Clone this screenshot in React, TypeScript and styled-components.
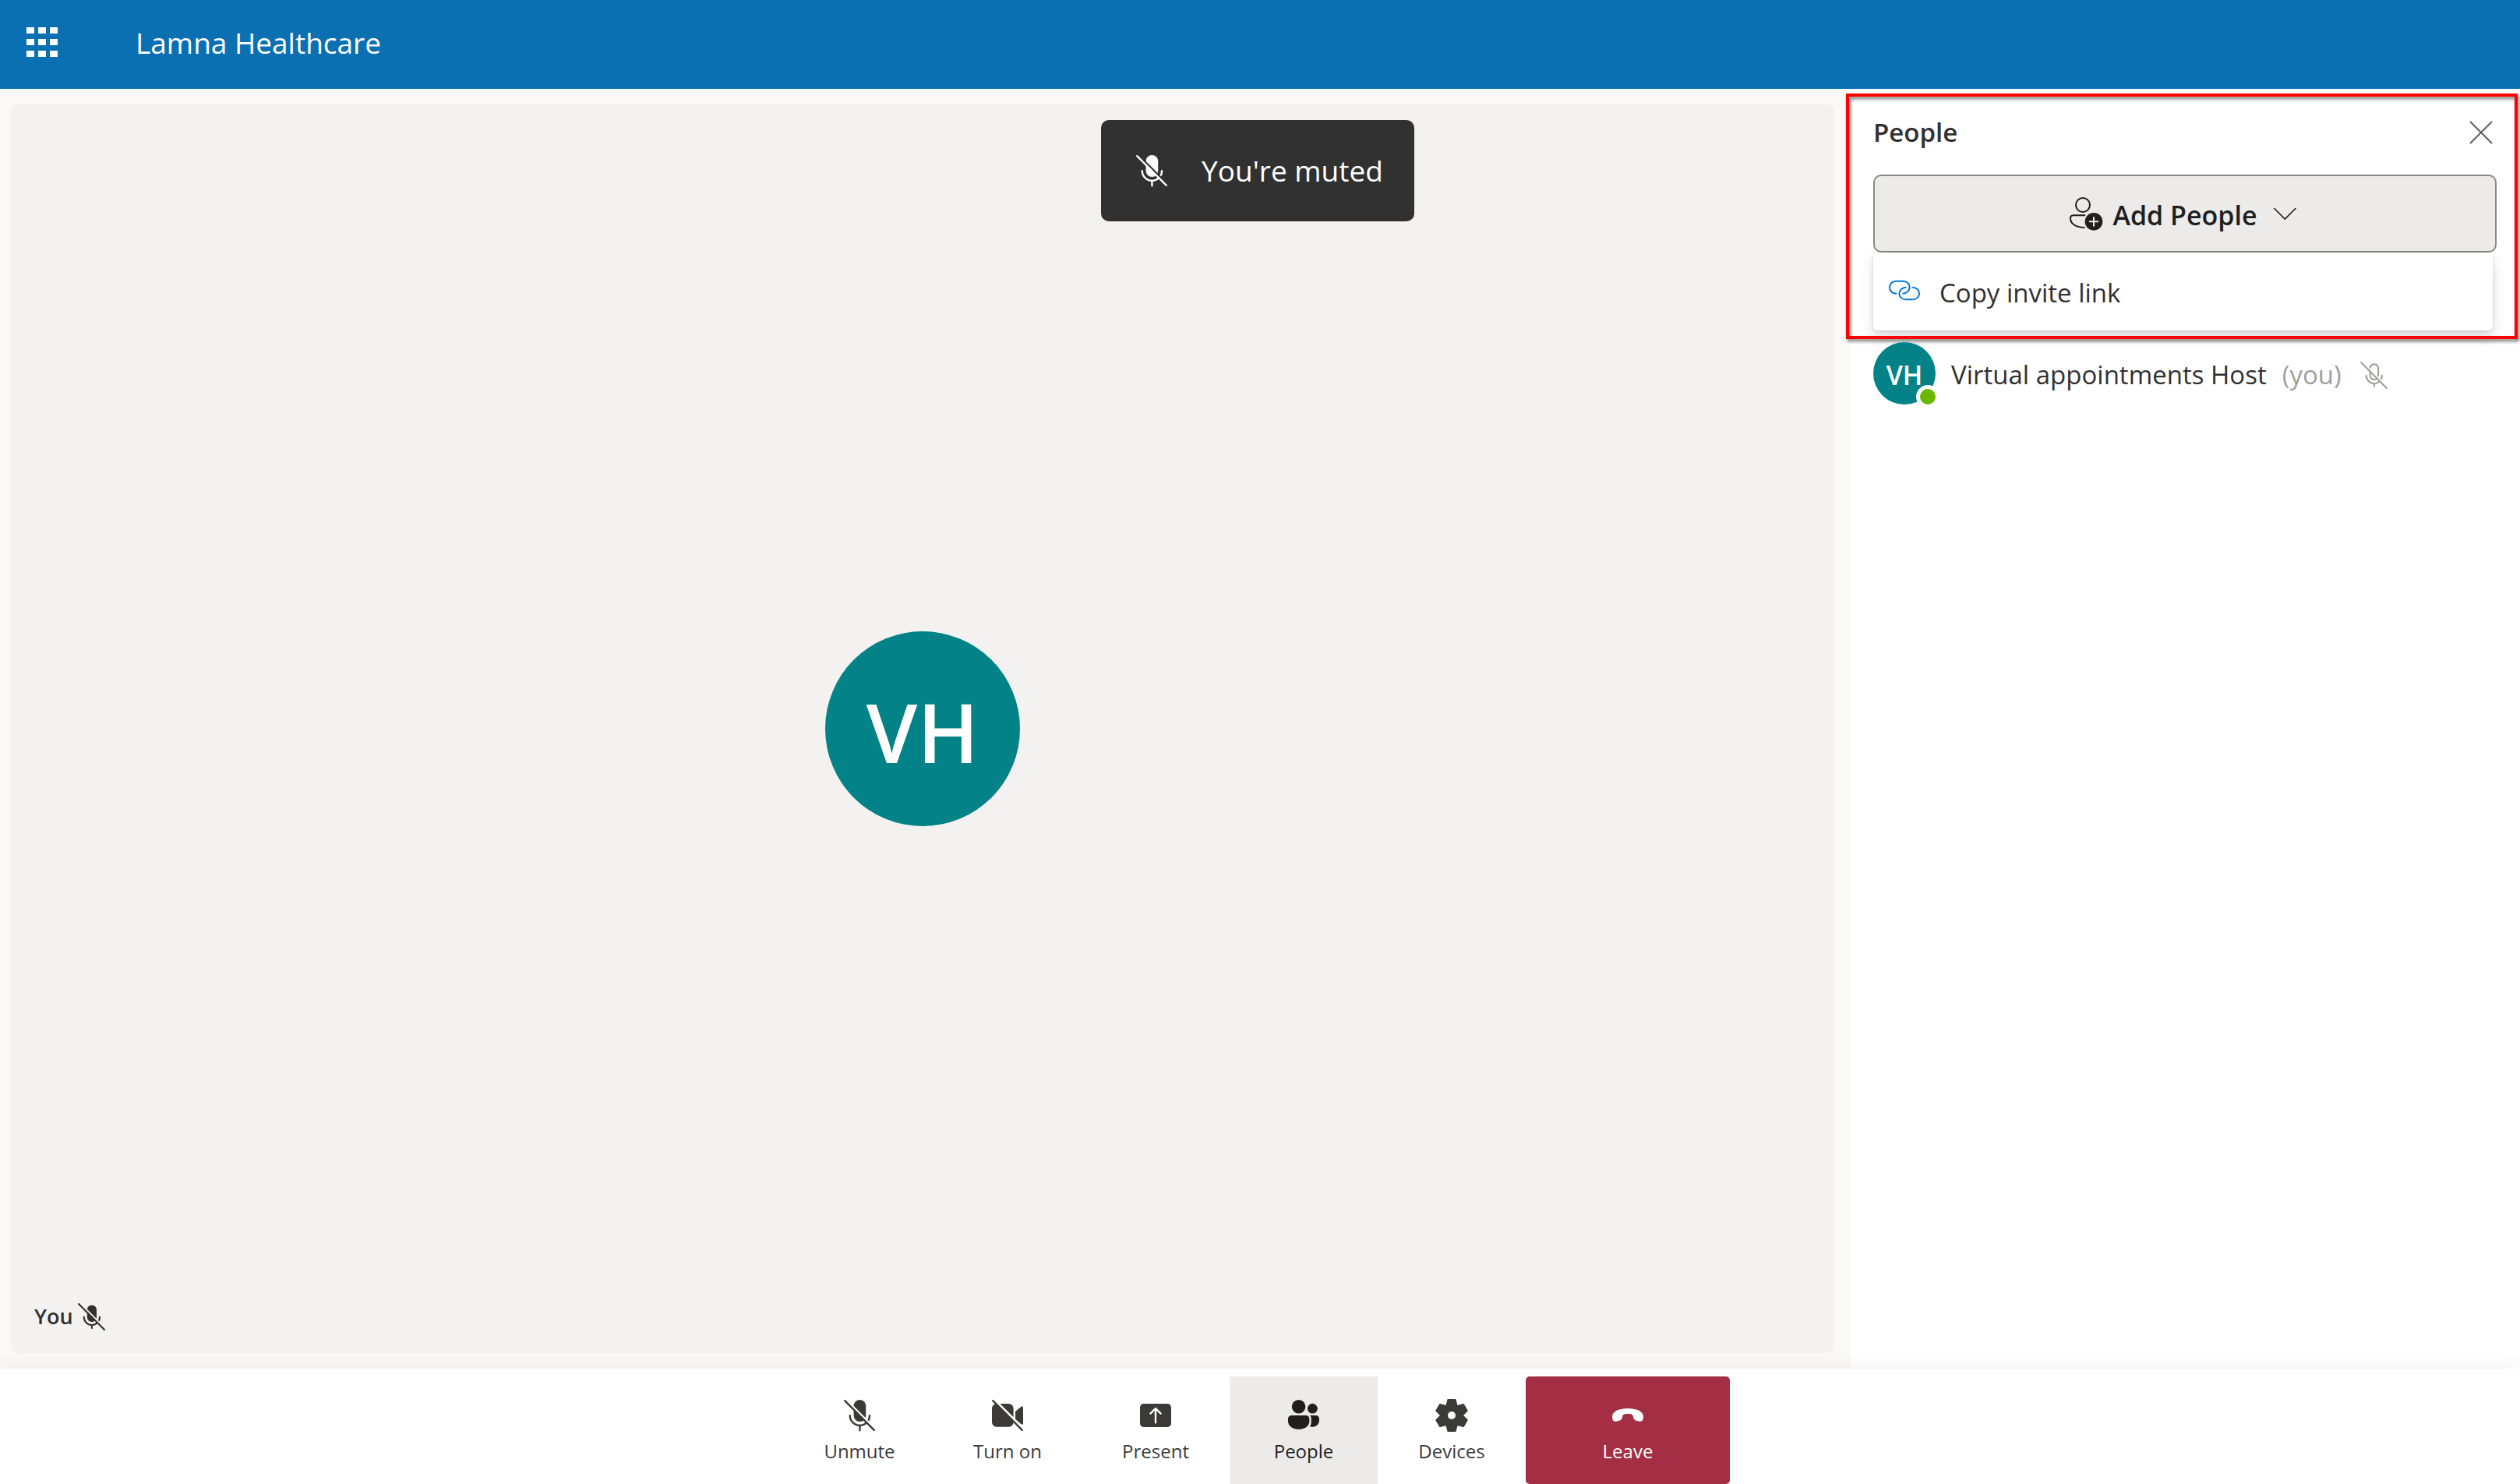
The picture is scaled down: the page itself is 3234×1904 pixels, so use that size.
import React, { useId } from "react";
import styled, { createGlobalStyle, css } from "styled-components";

const color = {
  brand: "#0b70b1",
  page: "#faf9f8",
  stage: "#f3f2f1",
  white: "#ffffff",
  text: "#323130",
  strong: "#201f1e",
  icon: "#3b3a39",
  muted: "#a19f9d",
  hover: "#edebe9",
  border: "#8a8886",
  teal: "#038387",
  green: "#6bb700",
  danger: "#a42e43",
  link: "#0078d4",
  toast: "#313131",
};

const GlobalStyle = createGlobalStyle`
  *, *::before, *::after { box-sizing: border-box; }
  body {
    margin: 0;
    background: ${color.page};
    color: ${color.text};
    font-family: "Open Sans", "Noto Sans", sans-serif;
    font-size: 33px;
    line-height: 48px;
  }
  button { font: inherit; color: inherit; border: 0; padding: 0; background: none; cursor: pointer; }
  h1, h2, p, ul { margin: 0; padding: 0; font: inherit; }
  ul { list-style: none; }
  svg { display: block; flex: none; overflow: visible; }
`;

const Page = styled.div`
  position: relative;
  display: flex;
  flex-direction: column;
  min-height: 100vh;
`;

const Header = styled.header`
  display: flex;
  align-items: center;
  gap: 100px;
  height: 114px;
  padding: 0 34px 4px;
  background: ${color.brand};
  color: ${color.white};
`;

const Waffle = styled.button`
  display: grid;
  grid-template-columns: repeat(3, 10px);
  gap: 7px 5px;
  margin-bottom: 2px;
`;

const WaffleDot = styled.span`
  height: 8px;
  background: ${color.white};
`;

const Brand = styled.h1`
  font-size: 37px;
`;

const Main = styled.main`
  display: flex;
  flex: 1;
`;

const StageArea = styled.div`
  display: flex;
  flex: 1;
  padding: 20px 20px 20px 14px;
`;

const Stage = styled.section`
  position: relative;
  display: flex;
  flex: 1;
  align-items: center;
  justify-content: center;
  border-radius: 10px;
  background: ${color.stage};
`;

const Avatar = styled.div<{ $large?: boolean }>`
  position: relative;
  display: flex;
  flex: none;
  align-items: center;
  justify-content: center;
  width: ${(p) => (p.$large ? 250 : 80)}px;
  height: ${(p) => (p.$large ? 250 : 80)}px;
  padding-top: ${(p) => (p.$large ? 8 : 4)}px;
  border-radius: 50%;
  background: ${color.teal};
  color: ${color.white};
  font-size: ${(p) => (p.$large ? 105 : 34)}px;
  font-weight: 600;
`;

const Presence = styled.span`
  position: absolute;
  right: -5px;
  bottom: -5px;
  width: 30px;
  height: 30px;
  border: 5px solid ${color.white};
  border-radius: 50%;
  background: ${color.green};
`;

const StageLabel = styled.div`
  position: absolute;
  left: 30px;
  bottom: 23px;
  display: flex;
  align-items: center;
  gap: 6px;
  font-size: 27px;
  font-weight: 600;
`;

const Toast = styled.div`
  position: absolute;
  top: 154px;
  left: 0;
  right: 6px;
  display: flex;
  align-items: center;
  gap: 44px;
  width: fit-content;
  height: 130px;
  margin: 0 auto;
  padding: 0 40px 0 45px;
  border-radius: 10px;
  background: ${color.toast};
  color: ${color.white};
  font-size: 37px;
`;

const Sidebar = styled.aside`
  width: 860px;
  background: ${color.white};
`;

const InviteSection = styled.section`
  position: relative;
  padding: 32px 30px 15px;
`;

const Highlight = styled.div`
  position: absolute;
  top: 6px;
  right: 3px;
  bottom: 4px;
  left: -5px;
  border: 4px solid #ff0000;
  filter: drop-shadow(2px 3px 2px rgba(0, 0, 0, 0.55));
  pointer-events: none;
`;

const PanelHeader = styled.div`
  display: flex;
  align-items: center;
  justify-content: space-between;
  padding: 0 5px 30px 0;
`;

const PanelTitle = styled.h2`
  font-weight: 600;
`;

const Label = styled.span`
  padding-top: 4px;
`;

const AddButton = styled.button`
  display: flex;
  align-items: center;
  justify-content: center;
  gap: 12px;
  width: 100%;
  height: 100px;
  border: 2px solid ${color.border};
  border-radius: 10px;
  background: ${color.hover};
  color: ${color.strong};
  font-size: 34px;
  font-weight: 600;
`;

const Menu = styled.ul`
  margin-right: 5px;
  border-radius: 5px;
  background: ${color.white};
  box-shadow: 0 8px 18px rgba(0, 0, 0, 0.13), 0 2px 5px rgba(0, 0, 0, 0.11);
`;

const MenuItem = styled.button`
  display: flex;
  align-items: center;
  gap: 25px;
  width: 100%;
  height: 100px;
  padding: 0 20px;
`;

const Participant = styled.li`
  display: flex;
  align-items: center;
  gap: 20px;
  padding: 0 30px;
`;

const Muted = styled(Label)`
  display: flex;
  align-items: center;
  gap: 24px;
  color: ${color.muted};
`;

const ControlBar = styled.footer`
  position: relative;
  display: flex;
  justify-content: center;
  height: 148px;
  padding: 10px 6px 0 0;
  background: ${color.white};
  box-shadow: 0 -2px 24px rgba(0, 0, 0, 0.06);
`;

const Control = styled.button<{ $active?: boolean; $danger?: boolean }>`
  display: flex;
  flex-direction: column;
  align-items: center;
  gap: 9px;
  width: 190px;
  padding-top: 30px;
  color: ${color.icon};
  font-size: 24px;
  line-height: 34px;
  ${(p) => p.$active && css`background: ${color.hover}; color: ${color.strong};`}
  ${(p) =>
    p.$danger &&
    css`
      width: 262px;
      border-radius: 5px;
      background: ${color.danger};
      color: ${color.white};
    `}
`;

const MicOff = ({ size, outline }: { size: number; outline?: boolean }) => {
  const id = useId();
  const small = size < 40;
  return (
    <svg width={size} height={size} viewBox="0 0 20 20" fill="none" stroke="currentColor" strokeWidth="1.2" strokeLinecap="round" aria-hidden="true">
      <mask id={id} maskUnits="userSpaceOnUse" x="-1" y="-1" width="22" height="22">
        <rect x="-1" y="-1" width="22" height="22" fill="#fff" stroke="none" />
        <path d="M0 -1.5 21.5 20" stroke="#000" strokeWidth="1.2" />
      </mask>
      <g mask={`url(#${id})`}>
        {outline ? (
          <rect x="7.2" y="1.9" width="6" height="11.2" rx="3" />
        ) : small ? (
          <rect x="6.7" y="1.4" width="7" height="12.4" rx="3.5" fill="currentColor" stroke="none" />
        ) : (
          <rect x="6.3" y="0" width="7.8" height="14" rx="3.9" fill="currentColor" stroke="none" />
        )}
        {small ? <path d="M4.4 10.2a5.8 5.8 0 0 0 11.6 0M10.2 16v2.3" /> : <path d="M3.9 10.1a6.3 6.3 0 0 0 12.6 0M10.2 16.6v3" />}
      </g>
      <path d="M.6.6 19.4 19.4" />
    </svg>
  );
};

const CameraOff = () => {
  const id = useId();
  return (
    <svg width="40" height="40" viewBox="0 0 20 20" fill="currentColor" aria-hidden="true">
      <mask id={id} maskUnits="userSpaceOnUse" x="-1" y="-1" width="22" height="22">
        <rect x="-1" y="-1" width="22" height="22" fill="#fff" />
        <path d="M0 -1.7 21.7 20" stroke="#000" strokeWidth="1.4" />
      </mask>
      <g mask={`url(#${id})`}>
        <rect x="0" y="2.5" width="13.8" height="14.9" rx="3" />
        <path d="M15 7.5 18.8 4.4q1.2-.7 1.2.6v10q0 1.3-1.2.6L15 12.6z" />
      </g>
      <path d="M.6.6 19.4 19.4" stroke="currentColor" strokeWidth="1.2" strokeLinecap="round" />
    </svg>
  );
};

const Present = () => (
  <svg width="40" height="40" viewBox="0 0 20 20" aria-hidden="true">
    <rect x="0" y="2.5" width="20" height="15" rx="2.4" fill="currentColor" />
    <path d="M10 14.6V5.6M6.7 8.8 10 5.5l3.3 3.3" fill="none" stroke="#fff" strokeWidth="1.2" strokeLinecap="round" strokeLinejoin="round" />
  </svg>
);

const People = () => (
  <svg width="40" height="40" viewBox="0 0 20 20" fill="currentColor" aria-hidden="true">
    <circle cx="6.8" cy="4.4" r="4.4" />
    <circle cx="15.7" cy="5.6" r="3.2" />
    <path d="M2.2 10h9.3a2.2 2.2 0 0 1 2.2 2.2v1.4c0 3.3-3 5.3-6.8 5.3S0 16.9 0 13.6v-1.4A2.2 2.2 0 0 1 2.2 10z" />
    <path d="M14 10h3.9a2.1 2.1 0 0 1 2.1 2.1v1c0 2.8-2.5 4.700-6 4.200.6-1 .9-2.200.9-3.700v-1.500c0-.9-.4-1.600-.9-2.100z" />
  </svg>
);

const gearPoints = Array.from({ length: 6 }, (_, i) =>
  [
    [-13, 10.3],
    [13, 10.3],
    [30, 6.8],
  ].map(([deg, r]) => {
    const a = ((deg + i * 60) * Math.PI) / 180;
    return `${(10 + r * Math.sin(a)).toFixed(2)},${(10 - r * Math.cos(a)).toFixed(2)}`;
  })
)
  .flat()
  .join(" ");

const Gear = () => (
  <svg width="40" height="40" viewBox="0 0 20 20" aria-hidden="true">
    <polygon points={gearPoints} fill="currentColor" stroke="currentColor" strokeWidth="1" strokeLinejoin="round" />
    <circle cx="10" cy="10" r="2.5" fill="#fff" />
  </svg>
);

const HangUp = () => (
  <svg width="40" height="40" viewBox="0 0 120 120" fill="currentColor" aria-hidden="true">
    <path d="M0 66C0 43 28 33 60 33s60 10 60 33l-1 6c-1 9-6 12-14 11l-12-3c-6-1-9-4-11-10l-2-8c-2-6-7-8-20-8s-18 2-20 8l-2 8c-2 6-5 9-11 10l-12 3c-8 1-13-2-14-11z" />
  </svg>
);

const PersonAdd = () => (
  <svg width="43" height="43" viewBox="0 0 129 129" fill="none" stroke="currentColor" strokeWidth="6" strokeLinecap="round" aria-hidden="true">
    <circle cx="51" cy="30" r="27" />
    <path d="M58 70H15C7 70 3 75 3 82c0 20 20 34 53 35" />
    <circle cx="93" cy="94" r="34" fill="currentColor" stroke="none" />
    <path d="M93 78v32M77 94h32" stroke="#edebe9" />
  </svg>
);

const Chevron = () => (
  <svg width="43" height="43" viewBox="0 0 129 129" fill="none" stroke="currentColor" strokeWidth="5" aria-hidden="true">
    <path d="M28 42 70 84 112 42" />
  </svg>
);

const LinkIcon = () => (
  <svg width="40" height="40" viewBox="0 0 120 120" fill="none" stroke={color.link} strokeWidth="6" strokeLinecap="round" aria-hidden="true">
    <path d="M28 68h-1C13 68 3 57 3 44s10-24 24-24h28c14 0 25 11 25 24 0 12-11 23-25 24" />
    <path d="M92 44c14 0 25 11 25 24S106 91 92 91H65C51 91 40 81 40 68s11-23 25-24" />
  </svg>
);

const Close = () => (
  <svg width="30" height="30" viewBox="0 0 30 30" fill="none" stroke="#605e5c" strokeWidth="2" aria-hidden="true">
    <path d="M1 1 29 29M29 1 1 29" />
  </svg>
);

export default function App() {
  return (
    <Page>
      <GlobalStyle />
      <Header>
        <Waffle aria-label="App launcher">
          {Array.from({ length: 9 }, (_, i) => (
            <WaffleDot key={i} />
          ))}
        </Waffle>
        <Brand>Lamna Healthcare</Brand>
      </Header>

      <Main>
        <StageArea>
          <Stage>
            <Avatar $large>VH</Avatar>
            <StageLabel>
              You
              <MicOff size={35} />
            </StageLabel>
          </Stage>
        </StageArea>

        <Sidebar>
          <InviteSection>
            <PanelHeader>
              <PanelTitle>People</PanelTitle>
              <button aria-label="Close">
                <Close />
              </button>
            </PanelHeader>
            <AddButton aria-haspopup="menu" aria-expanded="true">
              <PersonAdd />
              <Label>Add People</Label>
              <Chevron />
            </AddButton>
            <Menu>
              <li>
                <MenuItem>
                  <LinkIcon />
                  <Label>Copy invite link</Label>
                </MenuItem>
              </li>
            </Menu>
            <Highlight />
          </InviteSection>
          <ul>
            <Participant>
              <Avatar>
                VH
                <Presence />
              </Avatar>
              <Label>Virtual appointments Host</Label>
              <Muted>
                (you)
                <MicOff size={35} outline />
              </Muted>
            </Participant>
          </ul>
        </Sidebar>
      </Main>

      <ControlBar>
        <Control>
          <MicOff size={40} />
          Unmute
        </Control>
        <Control>
          <CameraOff />
          Turn on
        </Control>
        <Control>
          <Present />
          Present
        </Control>
        <Control $active>
          <People />
          People
        </Control>
        <Control>
          <Gear />
          Devices
        </Control>
        <Control $danger>
          <HangUp />
          Leave
        </Control>
      </ControlBar>

      <Toast role="status">
        <MicOff size={40} />
        You're muted
      </Toast>
    </Page>
  );
}
